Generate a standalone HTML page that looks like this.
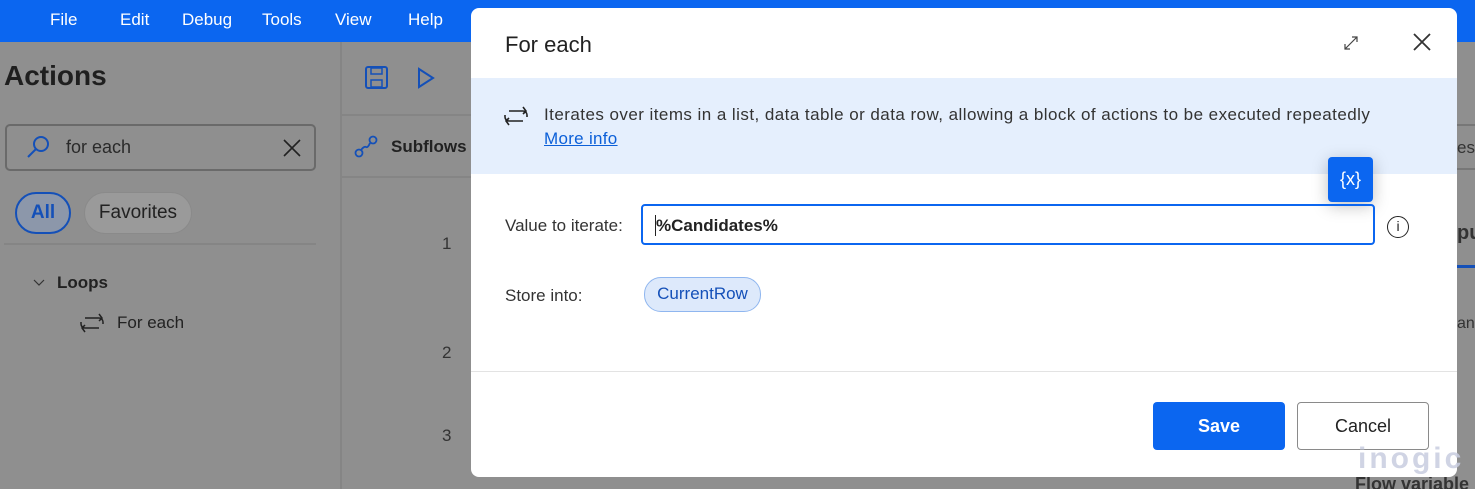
<!DOCTYPE html>
<html><head><style>
*{box-sizing:border-box;margin:0;padding:0}
html,body{width:1475px;height:489px;overflow:hidden}
body{position:relative;font-family:"Liberation Sans",sans-serif;color:#222}
.a{position:absolute}
.menu{left:0;top:0;width:1475px;height:42px;background:#0b66f0}
.menu span{position:absolute;top:10px;color:#fff;font-size:17px}
.dlg{left:471px;top:8px;width:986px;height:469px;background:#fff;border-radius:8px;overflow:hidden}
</style></head><body>
<div class="a" style="left:0;top:0;width:1475px;height:489px;background:#8f8f8f"></div>
<div class="a menu"><span style="left:50px">File</span><span style="left:120px">Edit</span><span style="left:182px">Debug</span><span style="left:262px">Tools</span><span style="left:335px">View</span><span style="left:408px">Help</span></div>
<div class="a" style="left:340px;top:42px;width:2px;height:447px;background:#858585"></div>
<div class="a" style="left:4px;top:60px;font-size:28px;font-weight:bold;color:#1f1f1f">Actions</div>
<div class="a" style="left:5px;top:124px;width:311px;height:47px;border:2px solid #6a6a6a;border-radius:5px"></div>
<svg class="a" style="left:26px;top:134px" width="26" height="26"><circle cx="15" cy="10" r="7" fill="none" stroke="#1450b8" stroke-width="2"/><path d="M10 15L2 23" stroke="#1450b8" stroke-width="2"/></svg>
<div class="a" style="left:66px;top:137px;font-size:18px;color:#2a2a2a">for each</div>
<svg class="a" style="left:283px;top:139px" width="18" height="18"><path d="M1 1L17 17M17 1L1 17" stroke="#222" stroke-width="1.6"/></svg>
<div class="a" style="left:15px;top:192px;width:56px;height:42px;border:2px solid #1450b8;border-radius:21px;background:#8c97aa;color:#1450b8;font-size:19px;font-weight:bold;text-align:center;line-height:38px">All</div>
<div class="a" style="left:84px;top:192px;width:108px;height:42px;border:1px solid #8a8a8a;border-radius:21px;background:#9a9a9a;color:#222;font-size:19px;text-align:center;line-height:40px">Favorites</div>
<div class="a" style="left:4px;top:243px;width:312px;height:2px;background:#858585"></div>
<svg class="a" style="left:32px;top:278px" width="14" height="10"><path d="M2 2L7 7L12 2" fill="none" stroke="#333" stroke-width="1.2"/></svg>
<div class="a" style="left:57px;top:273px;font-size:17px;font-weight:bold;color:#222">Loops</div>
<svg class="a" style="left:79px;top:310px" width="26" height="26"><path d="M6 8H20A4 4 0 0 1 24 12V14M20 4L23 8L20 11" fill="none" stroke="#222" stroke-width="1.5"/><path d="M20 18H6A4 4 0 0 1 2 14V12M6 22L3 18L6 15" fill="none" stroke="#222" stroke-width="1.5"/></svg>
<div class="a" style="left:117px;top:313px;font-size:17px;color:#222">For each</div>
<div class="a" style="left:342px;top:114px;width:130px;height:2px;background:#858585"></div>
<div class="a" style="left:342px;top:176px;width:130px;height:2px;background:#858585"></div>
<svg class="a" style="left:365px;top:66px" width="24" height="24"><rect x="1" y="1" width="21" height="21" rx="2" fill="none" stroke="#1450b8" stroke-width="2"/><rect x="6" y="2" width="11" height="6" fill="none" stroke="#1450b8" stroke-width="1.5"/><rect x="6" y="14" width="11" height="7" fill="none" stroke="#1450b8" stroke-width="1.5"/></svg>
<svg class="a" style="left:417px;top:67px" width="18" height="22"><path d="M2 2L16 11L2 20Z" fill="none" stroke="#1450b8" stroke-width="2"/></svg>
<svg class="a" style="left:353px;top:134px" width="26" height="26"><circle cx="6" cy="19" r="3.5" fill="none" stroke="#1450b8" stroke-width="1.8"/><circle cx="20" cy="6" r="3.5" fill="none" stroke="#1450b8" stroke-width="1.8"/><path d="M8 16Q11 12 13 13Q15 14 17 9" fill="none" stroke="#1450b8" stroke-width="1.8"/></svg>
<div class="a" style="left:391px;top:137px;font-size:17px;font-weight:bold;color:#222">Subflows</div>
<div class="a" style="left:442px;top:234px;font-size:17px;color:#333">1</div>
<div class="a" style="left:442px;top:343px;font-size:17px;color:#333">2</div>
<div class="a" style="left:442px;top:426px;font-size:17px;color:#333">3</div>
<div class="a" style="left:1457px;top:124px;width:18px;height:46px;border-top:2px solid #777;border-bottom:2px solid #777;font-size:17px;color:#333;line-height:44px">es</div>
<div class="a" style="left:1457px;top:222px;font-size:20px;font-weight:bold;color:#333">pu</div>
<div class="a" style="left:1457px;top:265px;width:18px;height:3px;background:#1450b8"></div>
<div class="a" style="left:1457px;top:315px;font-size:16px;color:#333">an</div>
<div class="a" style="left:1355px;top:474px;font-size:18px;font-weight:bold;color:#333">Flow variable</div>
<div class="a dlg">
 <div class="a" style="left:34px;top:24px;font-size:22px;color:#222">For each</div>
 <svg class="a" style="left:872px;top:27px" width="16" height="16"><path d="M2 14L14 2M9 2H14V7M2 9V14H7" fill="none" stroke="#444" stroke-width="1.2"/></svg>
 <svg class="a" style="left:942px;top:25px" width="18" height="18"><path d="M1 1L17 17M17 1L1 17" stroke="#333" stroke-width="1.8"/></svg>
 <div class="a" style="left:0;top:70px;width:986px;height:96px;background:#e5effd"></div>
 <svg class="a" style="left:32px;top:95px" width="28" height="26"><path d="M6 8H20A4 4 0 0 1 24 12V14M20 4L23 8L20 11" fill="none" stroke="#222" stroke-width="1.6"/><path d="M20 18H6A4 4 0 0 1 2 14V12M6 22L3 18L6 15" fill="none" stroke="#222" stroke-width="1.6"/></svg>
 <div class="a" style="left:73px;top:97px;font-size:17px;color:#333;letter-spacing:0.45px">Iterates over items in a list, data table or data row, allowing a block of actions to be executed repeatedly</div>
 <div class="a" style="left:73px;top:121px;font-size:17px;color:#0b5fd8;text-decoration:underline;letter-spacing:0.3px">More info</div>
 <div class="a" style="left:857px;top:149px;width:45px;height:45px;background:#0b66f0;border-radius:4px;color:#fff;font-size:18px;text-align:center;line-height:44px;box-shadow:0 4px 16px rgba(0,0,0,.25)">{x}</div>
 <div class="a" style="left:34px;top:208px;font-size:17px;color:#333">Value to iterate:</div>
 <div class="a" style="left:170px;top:196px;width:734px;height:41px;border:2px solid #0b66f0;border-radius:4px"></div>
 <div class="a" style="left:185px;top:208px;font-size:17px;color:#222;font-weight:bold">%Candidates%</div>
 <div class="a" style="left:184px;top:207px;width:1px;height:21px;background:#222"></div>
 <div class="a" style="left:916px;top:208px;width:22px;height:22px;border:1.5px solid #222;border-radius:50%;font-size:14px;text-align:center;line-height:19px">i</div>
 <div class="a" style="left:34px;top:278px;font-size:17px;color:#333">Store into:</div>
 <div class="a" style="left:173px;top:269px;width:117px;height:35px;background:#dde9fb;border:1.5px solid #8fb6ef;border-radius:17px;color:#1450b8;font-size:17px;text-align:center;line-height:32px">CurrentRow</div>
 <div class="a" style="left:0;top:363px;width:986px;height:1px;background:#e3e3e3"></div>
 <div class="a" style="left:682px;top:394px;width:132px;height:48px;background:#0b66f0;border-radius:4px;color:#fff;font-size:18px;font-weight:bold;text-align:center;line-height:48px">Save</div>
 <div class="a" style="left:826px;top:394px;width:132px;height:48px;border:1px solid #8a8a8a;border-radius:4px;color:#222;font-size:18px;text-align:center;line-height:46px">Cancel</div>
</div>
<div class="a" style="left:1358px;top:442px;font-size:30px;font-weight:bold;color:#c8cde0;letter-spacing:3px;opacity:.85">inogic</div>
</body></html>
